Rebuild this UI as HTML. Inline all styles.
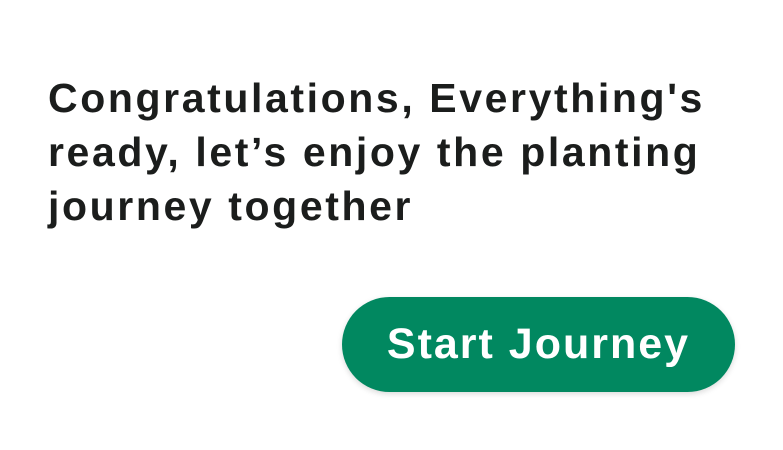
<!DOCTYPE html>
<html><head><style>
html,body{margin:0;padding:0;background:#fff;width:783px;height:450px;overflow:hidden;font-family:"Liberation Sans",sans-serif}
.t{position:absolute;left:48px;top:71px;font-size:41px;line-height:54px;color:#1b1d1c;font-weight:bold;letter-spacing:2.6px;white-space:nowrap}
.b{position:absolute;left:342px;top:297px;width:393px;height:95px;border-radius:48px;background:#018860;box-shadow:0 2px 6px rgba(0,0,0,0.15);color:#fff;font-weight:bold;font-size:43px;text-align:center;line-height:95px;letter-spacing:2px}
</style></head><body>
<div class="t">Congratulations, Everything's<br>ready, let’s enjoy the planting<br>journey together</div>
<div class="b">Start Journey</div>
</body></html>
